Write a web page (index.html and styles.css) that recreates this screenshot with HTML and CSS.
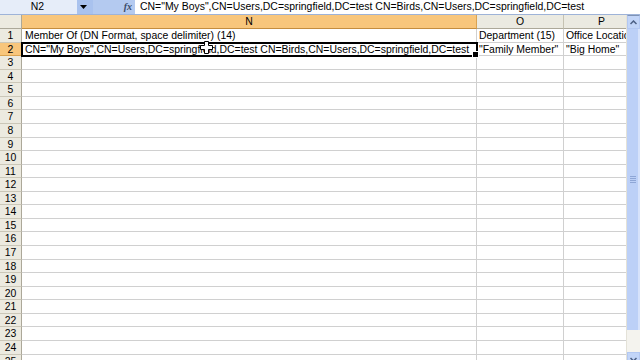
FILE: index.html
```html
<!DOCTYPE html>
<html>
<head>
<meta charset="utf-8">
<link rel="stylesheet" href="styles.css">
</head>
<body>
<div class="app">
  <div class="fbar">
    <div class="namebox">N2</div>
    <div class="nbdrop"><svg width="7" height="4" viewBox="0 0 7 4"><path d="M0 0H7L3.5 4Z" fill="#000"/></svg></div>
    <div class="fxzone"><span class="fx">fx</span></div>
    <div class="formula">CN="My Boys",CN=Users,DC=springfield,DC=test CN=Birds,CN=Users,DC=springfield,DC=test</div>
  </div>
  <div class="sheet">
    <div class="grid">
      <div class="row head"><div class="rh corner"></div><div class="ch n hl">N</div><div class="ch o">O</div><div class="ch p">P</div></div>
      <div class="row"><div class="rh">1</div><div class="c n">Member Of (DN Format, space delimiter) (14)</div><div class="c o">Department (15)</div><div class="c p">Office Location</div></div>
      <div class="row"><div class="rh hl">2</div><div class="c n sel">CN="My Boys",CN=Users,DC=springfield,DC=test CN=Birds,CN=Users,DC=springfield,DC=test<span class="cursor"><svg width="13" height="13" viewBox="0 0 13 13"><path d="M4.5 0.5H8.5V4.5H12.5V8.5H8.5V12.5H4.5V8.5H0.5V4.5H4.5Z" fill="#fff" stroke="#000"/></svg></span></div><div class="c o">"Family Member"</div><div class="c p">"Big Home"</div></div>
      <div class="row"><div class="rh">3</div><div class="c n"></div><div class="c o"></div><div class="c p"></div></div>
      <div class="row"><div class="rh">4</div><div class="c n"></div><div class="c o"></div><div class="c p"></div></div>
      <div class="row"><div class="rh">5</div><div class="c n"></div><div class="c o"></div><div class="c p"></div></div>
      <div class="row"><div class="rh">6</div><div class="c n"></div><div class="c o"></div><div class="c p"></div></div>
      <div class="row"><div class="rh">7</div><div class="c n"></div><div class="c o"></div><div class="c p"></div></div>
      <div class="row"><div class="rh">8</div><div class="c n"></div><div class="c o"></div><div class="c p"></div></div>
      <div class="row"><div class="rh">9</div><div class="c n"></div><div class="c o"></div><div class="c p"></div></div>
      <div class="row"><div class="rh">10</div><div class="c n"></div><div class="c o"></div><div class="c p"></div></div>
      <div class="row"><div class="rh">11</div><div class="c n"></div><div class="c o"></div><div class="c p"></div></div>
      <div class="row"><div class="rh">12</div><div class="c n"></div><div class="c o"></div><div class="c p"></div></div>
      <div class="row"><div class="rh">13</div><div class="c n"></div><div class="c o"></div><div class="c p"></div></div>
      <div class="row"><div class="rh">14</div><div class="c n"></div><div class="c o"></div><div class="c p"></div></div>
      <div class="row"><div class="rh">15</div><div class="c n"></div><div class="c o"></div><div class="c p"></div></div>
      <div class="row"><div class="rh">16</div><div class="c n"></div><div class="c o"></div><div class="c p"></div></div>
      <div class="row"><div class="rh">17</div><div class="c n"></div><div class="c o"></div><div class="c p"></div></div>
      <div class="row"><div class="rh">18</div><div class="c n"></div><div class="c o"></div><div class="c p"></div></div>
      <div class="row"><div class="rh">19</div><div class="c n"></div><div class="c o"></div><div class="c p"></div></div>
      <div class="row"><div class="rh">20</div><div class="c n"></div><div class="c o"></div><div class="c p"></div></div>
      <div class="row"><div class="rh">21</div><div class="c n"></div><div class="c o"></div><div class="c p"></div></div>
      <div class="row"><div class="rh">22</div><div class="c n"></div><div class="c o"></div><div class="c p"></div></div>
      <div class="row"><div class="rh">23</div><div class="c n"></div><div class="c o"></div><div class="c p"></div></div>
      <div class="row"><div class="rh">24</div><div class="c n"></div><div class="c o"></div><div class="c p"></div></div>
      <div class="row"><div class="rh">25</div><div class="c n"></div><div class="c o"></div><div class="c p"></div></div>
    </div>
    <div class="vscroll">
      <div class="sbtn up"><svg width="7" height="5" viewBox="0 0 7 5"><path d="M0.5 4L3.5 1L6.5 4" fill="none" stroke="#4d6185" stroke-width="1.5"/></svg></div>
      <div class="thumb"><span class="grip"></span></div>
      <div class="track"></div>
      <div class="sbtn down"><svg width="7" height="5" viewBox="0 0 7 5"><path d="M0.5 1L3.5 4L6.5 1" fill="none" stroke="#4d6185" stroke-width="1.5"/></svg></div>
    </div>
  </div>
</div>
</body>
</html>
```
FILE: styles.css
```css
* { box-sizing: border-box; }
html, body { margin: 0; padding: 0; }
body {
  width: 640px;
  height: 360px;
  overflow: hidden;
  background: #fff;
  font-family: "Liberation Sans", Arial, sans-serif;
  font-size: 10.45px;
  color: #000;
}
.app { display: flex; flex-direction: column; height: 360px; }

.fbar {
  display: flex;
  height: 15px;
  flex: none;
  border-bottom: 1px solid #9eb3d8;
}
.namebox {
  width: 77px;
  background: #e6edf9;
  text-align: center;
  line-height: 14px;
  padding-right: 2px;
}
.nbdrop {
  width: 16px;
  background: #a9c2ee;
  display: flex;
  align-items: center;
  justify-content: center;
  padding-right: 4px;
}
.fxzone {
  width: 42px;
  background: #b4caf0;
  display: flex;
  justify-content: flex-end;
  align-items: center;
  padding-right: 3px;
}
.fx {
  font-family: "Liberation Serif", serif;
  font-style: italic;
  font-weight: bold;
  font-size: 10px;
  color: #3a4a6a;
  line-height: 10px;
}
.formula {
  flex: 1;
  background: #fff;
  line-height: 14px;
  padding-left: 5px;
  white-space: nowrap;
  overflow: hidden;
}

.sheet { flex: 1; display: flex; min-height: 0; overflow: hidden; }
.grid { width: 626px; display: flex; flex-direction: column; overflow: hidden; }
.row { display: flex; height: 13.57px; flex: none; }
.row.head { height: 14px; }

.rh {
  width: 22px;
  flex: none;
  background: #eceae0;
  border-right: 1px solid #aca899;
  border-bottom: 1px solid #cbc7b8;
  text-align: center;
  line-height: 13px;
  color: #000;
}
.rh.corner { border-bottom-color: #aca899; }
.ch {
  flex: none;
  background: #ebeae1;
  border-right: 1px solid #c5c2b2;
  border-bottom: 1px solid #aca899;
  text-align: center;
  line-height: 13px;
}
.hl { background: #f8c67c; border-color: #d9a352; }
.ch.hl { border-bottom-color: #c48d3f; }

.n { width: 455px; }
.o { width: 87px; }
.p { flex: 1 0 auto; width: 100px; }
.ch.p { padding-right: 24px; }

.c {
  flex: none;
  border-right: 1px solid #d0d0d0;
  border-bottom: 1px solid #d0d0d0;
  padding-left: 3px;
  line-height: 13px;
  white-space: nowrap;
  overflow: hidden;
}
.c.o, .c.p { padding-left: 2px; }
.c.p { flex: 1 0 auto; }

.sel {
  position: relative;
  overflow: visible;
  outline: 2px solid #000;
  outline-offset: -1px;
  z-index: 2;
}
.sel::after {
  content: "";
  position: absolute;
  right: -3px;
  bottom: -3px;
  width: 5px;
  height: 5px;
  background: #000;
  border: 1px solid #fff;
}
.cursor {
  position: absolute;
  left: 178px;
  top: -2px;
  width: 13px;
  height: 13px;
}
.cursor svg { display: block; }

.vscroll {
  width: 14px;
  flex: none;
  display: flex;
  flex-direction: column;
  background: #f3f2ec;
  border-left: 1px solid #e4e2d8;
}
.sbtn {
  height: 14px;
  flex: none;
  background: #c2d5f8;
  border: 1px solid #b3c8f2;
  display: flex;
  align-items: center;
  justify-content: center;
}
.sbtn.up { border-top: 1px solid #7f93b6; }
.thumb {
  height: 301px;
  flex: none;
  background: #bcd0f7;
  border-right: 2px solid #d6e2fb;
  display: flex;
  align-items: center;
  justify-content: center;
}
.grip {
  width: 6px;
  height: 7px;
  background: repeating-linear-gradient(#8ea6d6 0 1px, transparent 1px 2px);
}
.track { height: 22px; flex: none; background: #f4f3ee; }
```
